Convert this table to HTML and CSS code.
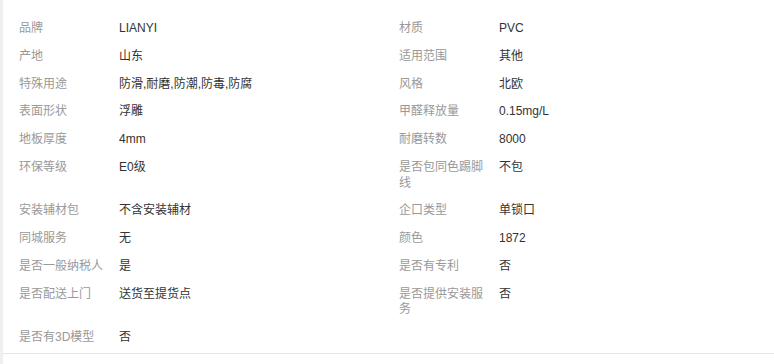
FILE: index.html
```html
<!DOCTYPE html>
<html lang="zh-CN">
<head>
<meta charset="utf-8">
<title>商品参数</title>
<link rel="stylesheet" href="styles.css">
</head>
<body>
<div class="wrap">
  <div class="attrs">
    <div class="item"><span class="k">品牌</span><span class="v">LIANYI</span></div>
    <div class="item"><span class="k">材质</span><span class="v">PVC</span></div>
    <div class="item"><span class="k">产地</span><span class="v">山东</span></div>
    <div class="item"><span class="k">适用范围</span><span class="v">其他</span></div>
    <div class="item"><span class="k">特殊用途</span><span class="v">防滑,耐磨,防潮,防毒,防腐</span></div>
    <div class="item"><span class="k">风格</span><span class="v">北欧</span></div>
    <div class="item"><span class="k">表面形状</span><span class="v">浮雕</span></div>
    <div class="item"><span class="k">甲醛释放量</span><span class="v">0.15mg/L</span></div>
    <div class="item"><span class="k">地板厚度</span><span class="v">4mm</span></div>
    <div class="item"><span class="k">耐磨转数</span><span class="v">8000</span></div>
    <div class="item"><span class="k">环保等级</span><span class="v">E0级</span></div>
    <div class="item"><span class="k">是否包同色踢脚线</span><span class="v">不包</span></div>
    <div class="item"><span class="k">安装辅材包</span><span class="v">不含安装辅材</span></div>
    <div class="item"><span class="k">企口类型</span><span class="v">单锁口</span></div>
    <div class="item"><span class="k">同城服务</span><span class="v">无</span></div>
    <div class="item"><span class="k">颜色</span><span class="v">1872</span></div>
    <div class="item"><span class="k">是否一般纳税人</span><span class="v">是</span></div>
    <div class="item"><span class="k">是否有专利</span><span class="v">否</span></div>
    <div class="item"><span class="k">是否配送上门</span><span class="v">送货至提货点</span></div>
    <div class="item"><span class="k">是否提供安装服务</span><span class="v">否</span></div>
    <div class="item"><span class="k">是否有3D模型</span><span class="v">否</span></div>
  </div>
</div>
</body>
</html>
```

FILE: styles.css
```css
html, body {
  margin: 0;
  padding: 0;
  background: #fff;
}
body {
  font-family: "Liberation Sans", "Noto Sans CJK SC", sans-serif;
  font-size: 12px;
  line-height: 15.6px;
}
.wrap {
  border-left: 3px solid #efefef;
  min-height: 100vh;
  box-sizing: border-box;
}
.attrs {
  display: grid;
  grid-template-columns: 380px 380px;
  padding: 15px 0 1px 16px;
  border-bottom: 1px solid #e6e6e6;
}
.item {
  display: flex;
  padding: 6.1px 0;
}
.k {
  width: 90px;
  margin-right: 10px;
  color: #999;
  flex: none;
}
.v {
  color: #333;
}
```
